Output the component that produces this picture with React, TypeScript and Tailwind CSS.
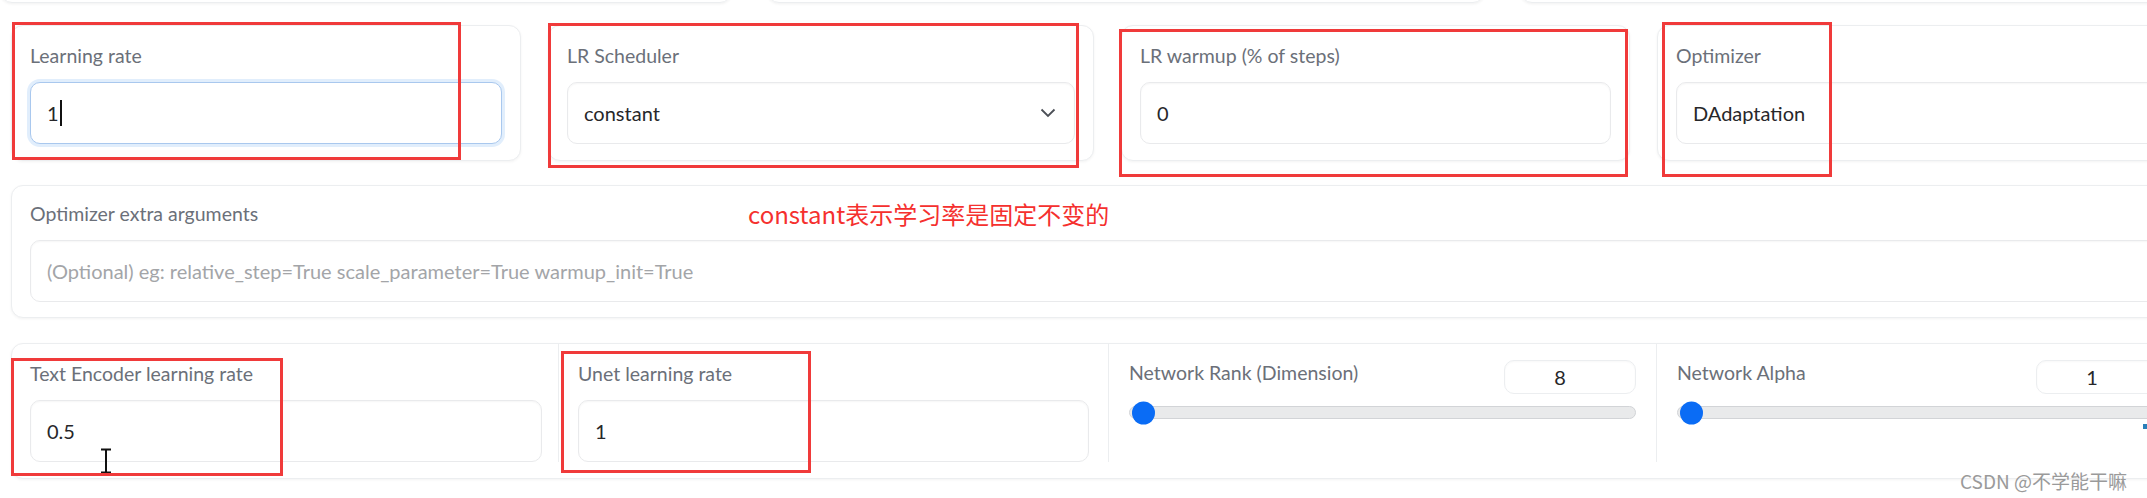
import React from 'react';

const font = "font-['Lato','Noto_Sans',sans-serif]";

const Label: React.FC<{ text: string }> = ({ text }) => (
  <div className="text-[19.5px] leading-[26px] text-[#6b7079]">{text}</div>
);

const TextBox: React.FC<{ value?: string; placeholder?: string; focused?: boolean; caret?: boolean }> = ({
  value,
  placeholder,
  focused,
  caret,
}) => (
  <div
    className={`mt-[13px] h-[62px] rounded-[10px] border bg-white px-[16px] flex items-center text-[20px] ${
      focused
        ? 'border-[#a9c8ee] shadow-[0_0_0_3px_rgba(170,205,245,0.35)]'
        : 'border-[#e9eaec] shadow-[inset_0_1px_2px_rgba(0,0,0,0.04)]'
    }`}
  >
    {value ? (
      <span className="text-[#27272a]">{value}</span>
    ) : (
      <span className="text-[#a3a5a8]">{placeholder}</span>
    )}
    {caret && <span className="ml-[1px] h-[26px] w-[2px] bg-[#111]" />}
  </div>
);

const Field: React.FC<{ label: string; width: string; children: React.ReactNode }> = ({ label, width, children }) => (
  <div
    className={`${width} shrink-0 rounded-[12px] border border-[#eceef0] bg-white px-[18px] pt-[17px] pb-[16px] shadow-[0_1px_3px_rgba(0,0,0,0.05)]`}
  >
    <Label text={label} />
    {children}
  </div>
);

const Slider: React.FC<{ label: string; value: string; width: string; last?: boolean }> = ({ label, value, width, last }) => (
  <div className={`${width} shrink-0 px-[20px] pt-[16px] ${last ? '' : 'border-r border-[#eceef0]'}`}>
    <div className="flex items-start justify-between">
      <Label text={label} />
      <div className="h-[34px] w-[132px] rounded-[10px] border border-[#eceef0] pr-[20px] flex items-center justify-center text-[20px] text-[#27272a] shadow-[inset_0_1px_2px_rgba(0,0,0,0.03)]">
        {value}
      </div>
    </div>
    <div className="relative mt-[12px] h-[13px] rounded-full border border-[#d2d4d7] bg-[#e9eaeb]">
      <div className="absolute left-[2px] top-1/2 -translate-y-1/2 h-[23px] w-[23px] rounded-full bg-[#0a6cf5]" />
    </div>
  </div>
);

const Box: React.FC<{ className: string }> = ({ className }) => (
  <div className={`absolute border-[3px] border-[#f03a3a] ${className}`} />
);

export default function App() {
  return (
    <div className={`relative h-[498px] w-[2147px] overflow-hidden bg-white ${font}`}>
      <div className="w-[2200px] pl-[11px]">
        {/* bottoms of the row above */}
        <div className="-ml-[11px] -mt-[12px] flex gap-[35px]">
          <div className="h-[15px] w-[732px] shrink-0 rounded-b-[12px] border border-[#eceef0] shadow-[0_1px_3px_rgba(0,0,0,0.06)]" />
          <div className="h-[15px] w-[718px] shrink-0 rounded-b-[12px] border border-[#eceef0] shadow-[0_1px_3px_rgba(0,0,0,0.06)]" />
          <div className="h-[15px] w-[700px] shrink-0 rounded-b-[12px] border border-[#eceef0] shadow-[0_1px_3px_rgba(0,0,0,0.06)]" />
        </div>

        <div className="mt-[22px] flex gap-[27px]">
          <Field label="Learning rate" width="w-[510px]">
            <TextBox value="1" focused caret />
          </Field>
          <Field label="LR Scheduler" width="w-[546px]">
            <div className="mt-[13px] h-[62px] rounded-[10px] border border-[#e9eaec] bg-white px-[16px] flex items-center justify-between text-[20px] text-[#27272a] shadow-[inset_0_1px_2px_rgba(0,0,0,0.04)]">
              <span>constant</span>
              <svg width="16" height="10" viewBox="0 0 16 10" className="mr-[2px]">
                <path d="M1.5 1.5 L8 8 L14.5 1.5" fill="none" stroke="#4b4f56" strokeWidth="1.8" />
              </svg>
            </div>
          </Field>
          <Field label="LR warmup (% of steps)" width="w-[509px]">
            <TextBox value="0" />
          </Field>
          <Field label="Optimizer" width="w-[531px]">
            <TextBox value="DAdaptation" />
          </Field>
        </div>

        <div className="mt-[24px] w-[2178px] rounded-[12px] border border-[#eceef0] bg-white px-[18px] pt-[15px] pb-[15px] shadow-[0_1px_3px_rgba(0,0,0,0.05)]">
          <Label text="Optimizer extra arguments" />
          <TextBox placeholder="(Optional) eg: relative_step=True scale_parameter=True warmup_init=True" />
        </div>

        <div className="mt-[25px] flex w-[2178px] rounded-[12px] border border-[#eceef0] bg-white pb-[16px] shadow-[0_1px_3px_rgba(0,0,0,0.05)]">
          <div className="w-[547px] shrink-0 border-r border-[#eceef0] pl-[18px] pr-[16px] pt-[17px]">
            <Label text="Text Encoder learning rate" />
            <TextBox value="0.5" />
          </div>
          <div className="w-[550px] shrink-0 border-r border-[#eceef0] px-[19px] pt-[17px]">
            <Label text="Unet learning rate" />
            <TextBox value="1" />
          </div>
          <Slider label="Network Rank (Dimension)" value="8" width="w-[548px]" />
          <Slider label="Network Alpha" value="1" width="w-[531px]" last />
        </div>
      </div>

      {/* I-beam mouse cursor */}
      <svg className="absolute left-[99px] top-[448px]" width="14" height="26" viewBox="0 0 14 26">
        <path d="M2 1.5 H12 M7 1.5 V24.5 M2 24.5 H12" fill="none" stroke="#111" strokeWidth="2" />
      </svg>

      {/* annotations */}
      <Box className="left-[12px] top-[22px] h-[138px] w-[449px]" />
      <Box className="left-[548px] top-[23px] h-[145px] w-[531px]" />
      <Box className="left-[1119px] top-[29px] h-[148px] w-[509px]" />
      <Box className="left-[1662px] top-[22px] h-[155px] w-[170px]" />
      <Box className="left-[11px] top-[358px] h-[118px] w-[272px]" />
      <Box className="left-[561px] top-[351px] h-[122px] w-[250px]" />

      <div className="absolute left-[748px] top-[198px] text-[24px] leading-[32px] text-[#f5302e] font-['Noto_Sans_CJK_SC',sans-serif]">
        constant表示学习率是固定不变的
      </div>

      <div className="absolute left-[2143px] top-[424px] h-[5px] w-[4px] bg-[#2a7fb8]" />

      <div className="absolute left-[1960px] top-[468px] text-[19px] leading-[26px] text-[#9a9a9a] font-['Noto_Sans_CJK_SC',sans-serif]">
        CSDN @不学能干嘛
      </div>
    </div>
  );
}
